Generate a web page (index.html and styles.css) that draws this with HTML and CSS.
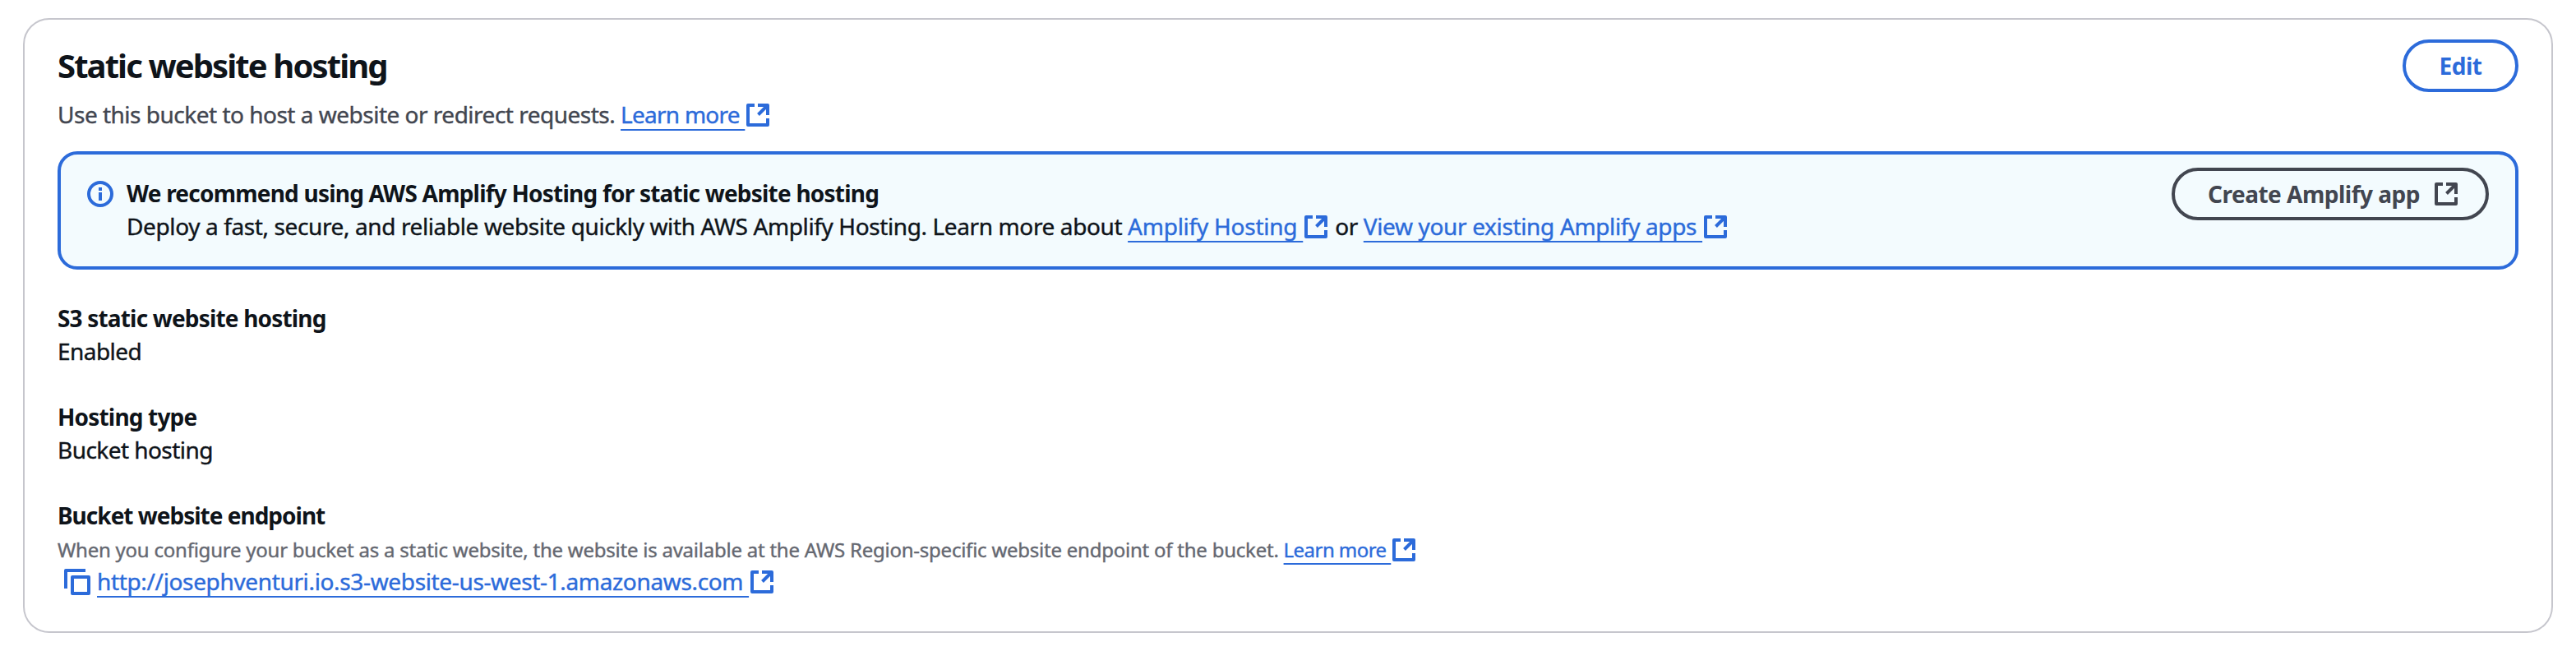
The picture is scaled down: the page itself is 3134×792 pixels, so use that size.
FILE: index.html
```html
<!DOCTYPE html>
<html lang="en">
<head>
<meta charset="utf-8">
<title>Static website hosting</title>
<link rel="stylesheet" href="styles.css">
</head>
<body>
<svg class="defs" width="0" height="0" aria-hidden="true">
  <symbol id="external" viewBox="0 0 32 32">
    <path d="M12 4H4V28H28V20M16 4H28V16M28 4L16.5 15.5"/>
  </symbol>
</svg>
<section class="card">
  <header class="header">
    <div>
      <h2 class="title">Static website hosting</h2>
      <p class="description">Use this bucket to host a website or redirect requests. <a class="link"><span class="link-text learn">Learn more&nbsp;</span><svg class="icon"><use href="#external"/></svg></a></p>
    </div>
    <button class="button primary">Edit</button>
  </header>

  <div class="alert">
    <svg class="info" viewBox="0 0 32 32"><circle cx="16" cy="16" r="14"/><path d="M16 8V12M16 14V24"/></svg>
    <div class="alert-body">
      <p class="alert-title">We recommend using AWS Amplify Hosting for static website hosting</p>
      <p class="alert-text">Deploy a fast, secure, and reliable website quickly with AWS Amplify Hosting. Learn more about <a class="link"><span class="link-text hosting">Amplify Hosting&nbsp;</span><svg class="icon"><use href="#external"/></svg></a> or <a class="link"><span class="link-text apps">View your existing Amplify apps&nbsp;</span><svg class="icon"><use href="#external"/></svg></a></p>
    </div>
    <button class="button normal"><span>Create Amplify app</span><svg class="icon"><use href="#external"/></svg></button>
  </div>

  <dl class="details">
    <div>
      <dt>S3 static website hosting</dt>
      <dd>Enabled</dd>
    </div>
    <div>
      <dt>Hosting type</dt>
      <dd>Bucket hosting</dd>
    </div>
    <div>
      <dt class="endpoint-label">Bucket website endpoint</dt>
      <dd class="hint">When you configure your bucket as a static website, the website is available at the AWS Region-specific website endpoint of the bucket. <a class="link"><span class="link-text learn-small">Learn more&nbsp;</span><svg class="icon"><use href="#external"/></svg></a></dd>
      <dd class="endpoint"><svg class="copy" viewBox="0 0 32 32"><path d="M26 2H2V24M10 10H30V30H10Z"/></svg><a class="link"><span class="link-text url">http://josephventuri.io.s3-website-us-west-1.amazonaws.com&nbsp;</span><svg class="icon"><use href="#external"/></svg></a></dd>
    </div>
  </dl>
</section>
</body>
</html>
```
FILE: styles.css
```css
* { box-sizing: border-box; }

body {
  margin: 0;
  padding: 22px 28px;
  background: #fff;
  color: #0f141a;
  font: 28px/40px "Noto Sans", "Open Sans", sans-serif;
}

h2, p, dl, dt, dd { margin: 0; }

p, dt, dd { white-space: nowrap; }

.defs { display: block; }

.card {
  height: 748px;
  border: 2px solid #c6c6cd;
  border-radius: 32px;
  padding: 24px 40px 0;
}

.header {
  display: flex;
  justify-content: space-between;
  align-items: flex-start;
  height: 136px;
}

.title {
  padding-top: 8px;
  font-size: 40px;
  line-height: 48px;
  font-weight: 700;
  letter-spacing: -1.9px;
}

.description {
  margin-top: 15px;
  color: #424650;
  letter-spacing: -0.5px;
}

.description,
.alert-text,
dd { -webkit-text-stroke: 0.4px currentColor; }

.button {
  display: flex;
  align-items: center;
  gap: 15px;
  height: 64px;
  border: 4px solid currentColor;
  border-radius: 32px;
  background: transparent;
  font: 700 28px/40px "Noto Sans", "Open Sans", sans-serif;
  letter-spacing: -0.5px;
  white-space: nowrap;
}

.primary {
  width: 141px;
  justify-content: center;
  padding: 0;
  color: #2c6bda;
}

.normal {
  width: 386px;
  justify-content: space-between;
  margin-left: auto;
  padding: 0 32px 0 40px;
  color: #424650;
}

.link { color: #2c6bda; }

.link-text {
  text-decoration: underline 2px;
  text-underline-offset: 7px;
  text-decoration-skip-ink: none;
}

.learn { letter-spacing: -0.75px; }
.hosting { letter-spacing: -0.25px; }
.apps { letter-spacing: -0.35px; }
.url { letter-spacing: -0.35px; }
.learn-small { letter-spacing: -0.55px; }

.icon {
  width: 32px;
  height: 32px;
  vertical-align: -6px;
  fill: none;
  stroke: currentColor;
  stroke-width: 4px;
  stroke-linejoin: round;
}

.alert {
  display: flex;
  align-items: flex-start;
  height: 144px;
  padding: 16px 32px;
  border: 4px solid #2c6bda;
  border-radius: 24px;
  background: #f3fbfe;
}

.info {
  width: 32px;
  height: 32px;
  margin: 16px 16px 0 0;
  fill: none;
  stroke: #2c6bda;
  stroke-width: 4px;
}

.alert-body { padding-top: 11px; }

.alert-title {
  font-weight: 700;
  letter-spacing: -0.78px;
}

.alert-text { letter-spacing: -0.385px; }

.details {
  display: grid;
  gap: 40px;
  padding-top: 39px;
}

dt {
  font-weight: 700;
  letter-spacing: -0.82px;
}

.endpoint-label { letter-spacing: -1px; }

dd { letter-spacing: -0.55px; }

.hint {
  height: 40px;
  color: #656871;
  font-size: 24px;
  line-height: 43px;
  letter-spacing: -0.235px;
}

.hint .icon { vertical-align: -7px; }

.endpoint {
  display: flex;
  padding-left: 8px;
}

.copy {
  width: 32px;
  height: 32px;
  margin: 5px 8px 0 0;
  fill: none;
  stroke: #2c6bda;
  stroke-width: 4px;
  stroke-linejoin: round;
}
```
